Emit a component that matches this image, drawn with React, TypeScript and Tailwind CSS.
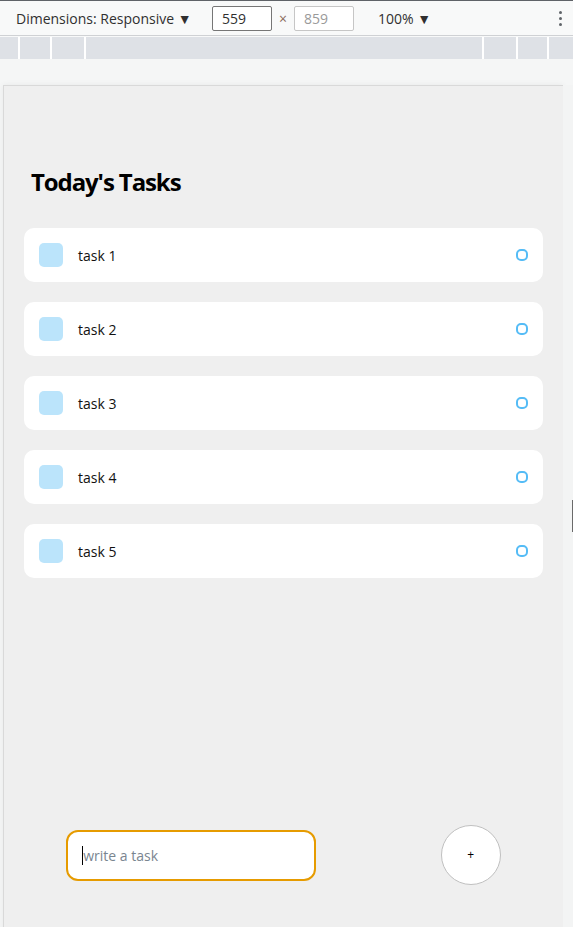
import React from "react";

const tasks = ["task 1", "task 2", "task 3", "task 4", "task 5"];

function Toolbar() {
    return (
        <div className="flex flex-col">
            <div className="h-px bg-[#5f6368]" />
            <div className="h-[35px] bg-[#f8f9f9] border-b border-[#cfd1d4] flex items-center pl-4 pr-2 text-[14px] text-[#303030]">
                <span className="w-[196px]">Dimensions: Responsive ▼</span>
                <div className="w-[60px] h-[25px] border border-[#767676] rounded-[2px] bg-white flex items-center pl-[9px]">559</div>
                <span className="w-[22px] text-center text-[#8a6a5c]">×</span>
                <div className="w-[60px] h-[25px] border border-[#c6c6c6] rounded-[2px] bg-white flex items-center pl-[9px] text-[#9a9a9a]">859</div>
                <span className="ml-6">100% ▼</span>
                <div className="ml-auto flex flex-col gap-[3px] pr-[3px]">
                    <span className="w-[3px] h-[3px] rounded-full bg-[#5f6368]" />
                    <span className="w-[3px] h-[3px] rounded-full bg-[#5f6368]" />
                    <span className="w-[3px] h-[3px] rounded-full bg-[#5f6368]" />
                </div>
            </div>
            <div className="h-px bg-[#f8f9f9]" />
            {/* ruler */}
            <div className="h-[22px] bg-[#dee1e6] flex">
                <div className="w-[18px]" />
                <div className="w-[2px] bg-white" />
                <div className="w-[30px]" />
                <div className="w-[2px] bg-white" />
                <div className="w-[32px]" />
                <div className="w-[2px] bg-white" />
                <div className="flex-1" />
                <div className="w-[2px] bg-white" />
                <div className="w-[32px]" />
                <div className="w-[2px] bg-white" />
                <div className="w-[29px]" />
                <div className="w-[2px] bg-white" />
                <div className="w-[24px]" />
            </div>
        </div>
    );
}

function TaskItem({ text }: { text: string }) {
    return (
        <div className="bg-white rounded-[10px] p-[15px] flex items-center justify-between mb-5">
            <div className="flex items-center">
                <div className="w-6 h-6 rounded-[5px] bg-[#55bcf6]/40 mr-[15px]" />
                <span className="text-[14px] text-[#111]">{text}</span>
            </div>
            <div className="w-3 h-3 rounded-[5px] border-2 border-[#55bcf6]" />
        </div>
    );
}

export default function App() {
    return (
        <div
            className="h-[927px] overflow-hidden flex flex-col bg-[#f5f6f6]"
            style={{ fontFamily: '"Open Sans", "Noto Sans", sans-serif' }}
        >
            <Toolbar />
            <div className="flex flex-1 pt-[26px] pl-[3px] min-h-0">
                {/* device frame */}
                <div className="w-[560px] h-[860px] shrink-0 border-l border-t border-[#d9d9d9] bg-[#efefef] flex flex-col shadow-[0_0_6px_rgba(0,0,0,0.06)]">
                    <div className="pt-[80px] px-5">
                        <h1 className="pl-[7px] text-[24px] leading-[32px] font-bold tracking-[-1.1px] text-black">Today's Tasks</h1>
                        <div className="mt-[30px]">
                            {tasks.map((t) => (
                                <TaskItem key={t} text={t} />
                            ))}
                        </div>
                    </div>
                    <div className="flex-1" />
                    <div className="flex items-center justify-around mb-[60px]">
                        <div className="relative">
                            <input
                                className="w-[250px] h-[51px] px-[15px] bg-white rounded-[12px] border-2 border-[#e69b00] outline-none text-[14px] placeholder:text-[#7a8590]"
                                placeholder="write a task"
                            />
                            <span className="absolute left-[16px] top-[16px] w-px h-[19px] bg-black" />
                        </div>
                        <div className="w-[60px] h-[60px] rounded-full bg-white border border-[#c0c0c0] flex items-center justify-center text-[12px] text-black">
                            +
                        </div>
                    </div>
                </div>
                <div className="flex-1 bg-[#f3f4f4] flex justify-end">
                    <div className="mt-[415px] w-px h-[32px] bg-[#6a6a6a]" />
                </div>
            </div>
        </div>
    );
}
